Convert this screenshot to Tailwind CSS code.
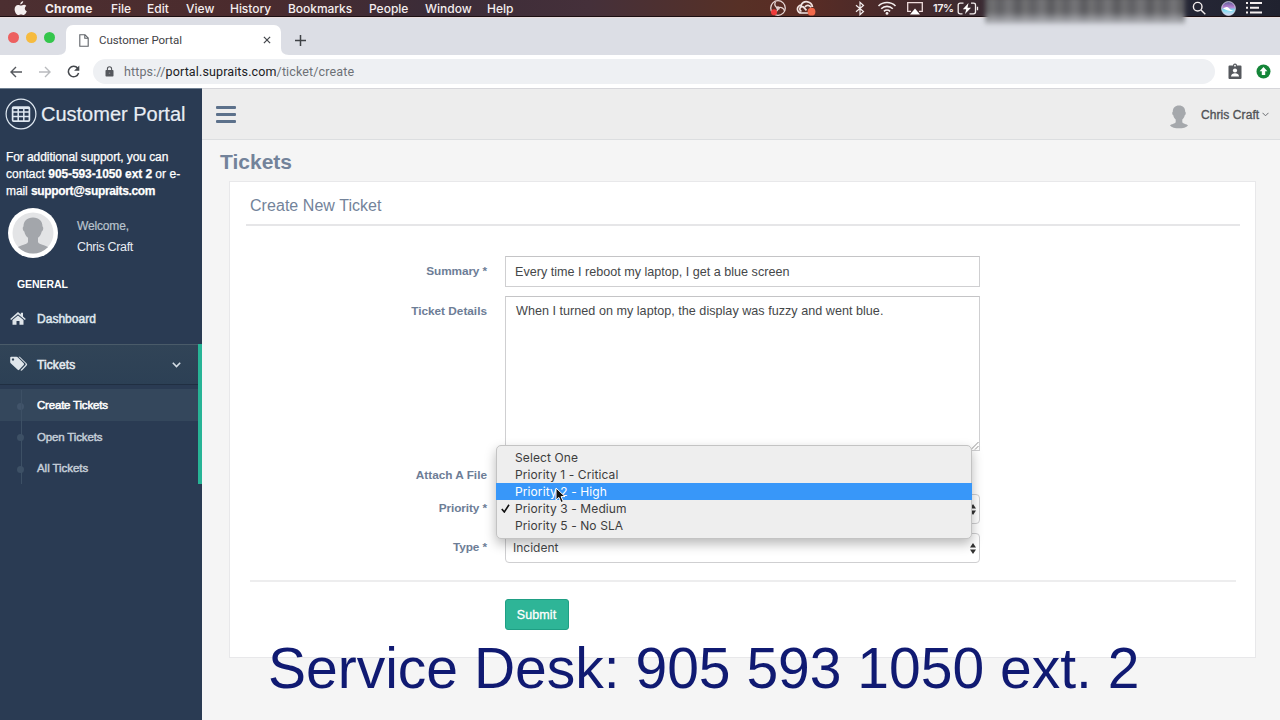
<!DOCTYPE html>
<html lang="en">
<head>
<meta charset="utf-8">
<title>Customer Portal</title>
<script src="https://cdn.jsdelivr.net/npm/@tailwindcss/browser@4"></script>
</head>
<body class="relative flex h-[720px] w-[1280px] flex-col overflow-hidden bg-[#f5f5f5] font-['Liberation_Sans',Arial,sans-serif]">

<!-- System menu bar -->
<div class="flex h-[17px] shrink-0 items-center border-b border-[#1b0f12] bg-[linear-gradient(90deg,#4c2f31_0px,#4b2b2d_250px,#3b2c38_430px,#45303a_590px,#573026_740px,#5a2c24_800px,#4a2a2a_880px,#3a2a32_980px,#252635_1190px,#20222f_1280px)] pl-[14px] font-[Inter,sans-serif] text-[12px] font-medium text-[#f4eeee]">
  <svg class="mr-[18px] h-[15px] w-[13px] shrink-0" viewBox="0 0 13 15" fill="#f4eeee"><path d="M9.2 0C9.3 1.8 8 3.3 6.3 3.4 6.1 1.7 7.6.2 9.2 0zM12.3 5c-2.2 1.5-1.8 4.4.5 5.3-.6 1.7-1.8 3.7-3.1 3.7-1 0-1.5-.6-2.7-.6s-1.700.6-2.700.6C2.500 14 .6 11 .6 8.200.6 5.500 2.200 3.900 4 3.900c1.200 0 2.100.7 2.900.7.800 0 1.800-.8 3.200-.8.9 0 1.700.4 2.200 1.200z"/></svg>
  <span class="w-[66px] pt-px font-bold tracking-[.2px]">Chrome</span>
  <span class="w-[36px] pt-px">File</span>
  <span class="w-[39px] pt-px">Edit</span>
  <span class="w-[44px] pt-px">View</span>
  <span class="w-[58px] pt-px tracking-[-.05px]">History</span>
  <span class="w-[81px] pt-px tracking-[-.05px]">Bookmarks</span>
  <span class="w-[56px] pt-px">People</span>
  <span class="w-[62px] pt-px">Window</span>
  <span class="w-[282px] pt-px">Help</span>
  <svg class="h-[16px] w-[18px] shrink-0" viewBox="0 0 18 16" fill="none" stroke="#e6d6d4" stroke-width="1.300"><circle cx="9" cy="8" r="7.300"/><path d="M9 8C6 7 5 4.500 6.500 2M9 8c3-1.500 6 0 6.500 3M9 8c0 3-2.500 5-5.500 4.200" /><circle cx="9" cy="8" r="1.200"/><circle cx="5" cy="12.300" r="3" fill="#ee3a3a" stroke="none"/></svg>
  <svg class="ml-[9px] h-[16px] w-[20px] shrink-0" viewBox="0 0 20 16" fill="none" stroke="#f1e4e2" stroke-width="1.700"><path d="M13 13H5.500a3.900 3.900 0 0 1-.4-7.800A6 6 0 0 1 16.500 7M10.500 10.300 8 7.700a2.300 2.300 0 1 0-2.500 3.500M9 7a3.500 3.500 0 0 1 6 .3"/><circle cx="15.500" cy="11.700" r="3.900" fill="#f2694a" stroke="none"/></svg>
  <svg class="ml-[38px] h-[15px] w-[12px] shrink-0" viewBox="0 0 12 15" fill="none" stroke="#f4eeee" stroke-width="1.200"><path d="M2 4.200l7.500 6.300L6 13.700V1.300l3.500 3.200L2 10.800"/></svg>
  <svg class="ml-[11px] h-[14px] w-[20px] shrink-0" viewBox="0 0 20 14" fill="none" stroke="#f4eeee" stroke-width="1.600"><path d="M1.500 5a12 12 0 0 1 17 0M4.200 7.800a8.200 8.200 0 0 1 11.600 0M6.900 10.300a4.500 4.500 0 0 1 6.200 0"/><circle cx="10" cy="12.400" r="1.400" fill="#f4eeee" stroke="none"/></svg>
  <svg class="ml-[9px] h-[14px] w-[18px] shrink-0" viewBox="0 0 18 14"><path d="M5 10.300H1.700V1.600h14.600v8.700H13" fill="none" stroke="#efdcdc" stroke-width="1.300"/><path d="M9 7.500l5 6H4z" fill="#fff"/></svg>
  <span class="ml-[9px] w-[24px] pt-px text-[11px] font-semibold tracking-[-.5px]">17%</span>
  <svg class="h-[13px] w-[22px] shrink-0" viewBox="0 0 22 13"><path d="M6.500 1.200H3.200Q1.200 1.200 1.200 3v7q0 1.800 2 1.800H5.500M14 1.200h2.500q2 0 2 1.800v7q0 1.800-2 1.800H12.500M20.500 4.800v3.500" fill="none" stroke="#f4eeee" stroke-width="1.300"/><path d="M11.500 1 5.800 7.200h3.400L8 12l6-6.300h-3.500z" fill="#fff"/></svg>
  <svg class="ml-[213px] h-[14px] w-[14px] shrink-0" viewBox="0 0 14 14" fill="none" stroke="#f4eeee" stroke-width="1.400"><circle cx="5.700" cy="5.700" r="4.300"/><path d="M9 9l4.300 4.300"/></svg>
  <svg class="ml-[15px] h-[15px] w-[15px] shrink-0" viewBox="0 0 15 15"><defs><linearGradient id="siri" x1="0" y1="0" x2="0" y2="1"><stop offset="0" stop-color="#5a5b94"/><stop offset=".4" stop-color="#b77fd0"/><stop offset=".6" stop-color="#77dcf0"/><stop offset="1" stop-color="#d9d5f2"/></linearGradient></defs><circle cx="7.500" cy="7.500" r="6.900" fill="url(#siri)" stroke="#d8d8e4" stroke-width=".8"/><path d="M2 7.500Q6 4.500 8 7.300T13 9Q9 11.500 2 7.500z" fill="#fff"/></svg>
  <svg class="ml-[10px] h-[12px] w-[17px] shrink-0" viewBox="0 0 17 12" fill="#f4eeee"><path d="M0 0h2v2H0zM0 4.700h2v2H0zM0 9.500h2v2H0zM4 0h12v2H4zM4 4.700h9v2H4zM4 9.500h12v2H4z"/></svg>
</div>
<!-- Obscured clock -->
<div class="absolute left-[985px] top-[-3px] h-[27px] w-[200px] bg-[linear-gradient(180deg,transparent_55%,#b9bbc1_100%),repeating-linear-gradient(90deg,#58585c_0px,#727274_7px,#5f5f63_15px,#77777a_24px,#59595d_33px)] blur-[2px]"></div>

<!-- Tab strip -->
<div class="flex h-[38px] shrink-0 items-end border-t border-[#e9dede] bg-[#dcdee5]">
  <div class="flex h-full w-[58px] items-center gap-[7px] pl-[8px] pt-[2px]">
    <i class="h-[11px] w-[11px] rounded-full bg-[#ed6060]"></i>
    <i class="h-[11px] w-[11px] rounded-full bg-[#f6bb3f]"></i>
    <i class="h-[11px] w-[11px] rounded-full bg-[#34c64c]"></i>
  </div>
  <svg class="h-[7px] w-[8px]" viewBox="0 0 8 7"><path d="M8 0v7H0q8 0 8-7z" fill="#fff"/></svg>
  <div class="flex h-[30px] w-[215px] items-center rounded-t-[7px] bg-white pl-[13px] pr-[9px]">
    <svg class="h-[13px] w-[10px]" viewBox="0 0 10 13" fill="none" stroke="#5f6368" stroke-width="1.100"><path d="M.8.700h5.200L9.200 4v8.300H.8zM5.800.700v3.500h3.400"/></svg>
    <span class="ml-[10px] flex-1 pt-px font-[Roboto,sans-serif] text-[11.500px] tracking-[-.05px] text-[#3f4246]">Customer Portal</span>
    <svg class="mr-[1px] h-[8px] w-[8px]" viewBox="0 0 9 9" stroke="#45484d" stroke-width="1.400"><path d="M1 1l7 7M8 1L1 8"/></svg>
  </div>
  <svg class="h-[7px] w-[8px]" viewBox="0 0 8 7"><path d="M0 0v7h8Q0 7 0 0z" fill="#fff"/></svg>
  <svg class="mb-[9px] ml-[6px] h-[11px] w-[11px]" viewBox="0 0 11 11" stroke="#3f4246" stroke-width="1.500"><path d="M5.500 0v11M0 5.500h11"/></svg>
</div>

<!-- Toolbar -->
<div class="flex h-[33px] shrink-0 items-center bg-white pl-[10px]">
  <svg class="h-[12px] w-[12px]" viewBox="0 0 12 12" fill="none" stroke="#55585d" stroke-width="1.400"><path d="M12 6H1.200M6 1L1 6l5 5"/></svg>
  <svg class="ml-[17px] h-[12px] w-[12px]" viewBox="0 0 12 12" fill="none" stroke="#b9bbbe" stroke-width="1.400"><path d="M0 6h10.800M6 1l5 5-5 5"/></svg>
  <svg class="ml-[16px] h-[13px] w-[13px]" viewBox="0 0 13 13"><path d="M10.700 3.300A5.200 5.200 0 1 0 11.600 8" fill="none" stroke="#45484d" stroke-width="1.500"/><path d="M12.300.600v5.200H7.100z" fill="#45484d"/></svg>
  <div class="ml-[13px] flex h-[25px] w-[1122px] items-center rounded-full bg-[#eef0f3] pl-[12px]">
    <svg class="h-[11px] w-[9px]" viewBox="0 0 9 11"><rect x=".5" y="4" width="8" height="6.500" rx=".8" fill="#55585d"/><path d="M2.400 4.500V2.900a2.100 2.100 0 0 1 4.200 0v1.600" fill="none" stroke="#55585d" stroke-width="1.100"/><circle cx="4.500" cy="7.200" r=".8" fill="#85888c"/></svg>
    <span class="ml-[10px] pt-px font-[Roboto,sans-serif] text-[12.500px] tracking-[.13px] text-[#6d7176]">https://<span class="text-[#202124]">portal.supraits.com</span>/ticket/create</span>
  </div>
  <svg class="ml-[13px] h-[17px] w-[14px]" viewBox="0 0 14 17"><path d="M1.500 2.500h3.500a2 2 0 0 1 4 0h3.500q1 0 1 1v11.500q0 1-1 1h-11q-1 0-1-1V3.500q0-1 1-1z" fill="#55585d"/><circle cx="7" cy="2.700" r=".9" fill="#fff"/><circle cx="7" cy="7.500" r="2.100" fill="#fff"/><path d="M3 13.500c0-4.300 8-4.300 8 0z" fill="#fff"/></svg>
  <svg class="ml-[14px] h-[15px] w-[15px]" viewBox="0 0 15 15"><circle cx="7.500" cy="7.500" r="7" fill="#148538"/><path d="M7.500 3l3.900 4.300H9.200v3.700H5.800V7.300H3.600z" fill="#fff"/></svg>
</div>

<div class="flex min-h-0 flex-1">
  <!-- Sidebar -->
  <aside class="flex w-[202px] shrink-0 flex-col border-t border-[#6f7f91] bg-[#2a3b53] text-[#e8edf3]">
    <div class="flex h-[51px] items-center pb-px pl-[5px]">
      <svg class="h-[32px] w-[32px]" viewBox="0 0 32 32" fill="none" stroke="#dfe8f1"><circle cx="16" cy="16" r="14.900" stroke-width="1.200"/><rect x="7.600" y="9.100" width="16.800" height="14" rx="1" stroke-width="1.700"/><path d="M13.200 9v14M18.800 9v14M8 14h16M8 18.500h16" stroke-width="1.500"/><path d="M7.500 10h17" stroke-width="2"/></svg>
      <span class="ml-[4px] text-[20px] [-webkit-text-stroke:.2px]">Customer Portal</span>
    </div>
    <p class="mt-[9px] w-[200px] whitespace-nowrap pl-[6px] text-[12px] leading-[17px] tracking-[-.08px] text-white [-webkit-text-stroke:.25px]">For additional support, you can<br><span class="tracking-[.04px]">contact <b class="tracking-[-.1px]">905-593-1050 ext 2</b> or e-</span><br>mail <b class="tracking-[-.34px]">support@supraits.com</b></p>
    <div class="mt-[7px] flex h-[52px] items-center pl-[8px]">
      <svg class="h-[50px] w-[50px]" viewBox="0 0 50 50"><defs><clipPath id="ava"><circle cx="25" cy="25" r="20.500"/></clipPath></defs><circle cx="25" cy="25" r="25" fill="#fff"/><circle cx="25" cy="25" r="20.500" fill="#e3e4e6"/><g clip-path="url(#ava)" fill="#a3a6ab"><path d="M25 9.500c6 0 9.500 3.500 9.500 9 1.300.5.800 4.500-.8 5-.5 3-2 5-3.700 6.300V34c1 3.500 12 3 14 9v7H6v-7c2-6 13-5.500 14-9v-4.200c-1.700-1.300-3.200-3.300-3.700-6.300-1.600-.5-2.100-4.500-.8-5 0-5.500 3.500-9 9.500-9z"/></g></svg>
      <div class="ml-[19px] pt-[7px] text-[12px] leading-[21px]">
        <div class="tracking-[-.15px] text-[#b9c3cd] [-webkit-text-stroke:.2px]">Welcome,</div>
        <div class="text-[12.500px] tracking-[-.35px]">Chris Craft</div>
      </div>
    </div>
    <div class="flex h-[35px] items-end pb-[3px] pl-[17px] text-[10.500px] font-bold leading-[14px] tracking-[-.05px] text-white">GENERAL</div>
    <div class="flex h-[50px] items-center pl-[10px]">
      <svg class="mb-[2px] h-[13px] w-[16px]" viewBox="0 0 16 13" fill="#dfe5ea"><path d="M8 0l2.800 2.500V.700H13v3.800l2.800 2.400-.9 1.100L8 2.200 1.100 8 .200 6.900z"/><path d="M8 3.400l5.500 4.600v4.800H9.500V9H6.500v3.800h-4V8z"/></svg>
      <span class="ml-[11px] text-[12px] tracking-[.02px] text-[#dfe6ee] [-webkit-text-stroke:.5px]">Dashboard</span>
    </div>
    <div class="border-r-[4px] border-[#27b496]">
      <div class="flex h-[41px] items-center border-b border-t border-b-[#202f42] border-t-[#4a5b69] bg-linear-to-b from-[#314457] to-[#2c4055] pl-[10px]">
        <svg class="mb-[3px] h-[15px] w-[18px]" viewBox="0 0 18 15" fill="#dfe5ea"><path fill-rule="evenodd" d="M1.200.800h5.300q.7 0 1.200.5l6 6q.8.800 0 1.600l-4.500 4.900q-.8.700-1.500 0L.700 7.300Q.200 6.800.200 6V1.800q0-1 1-1zM3 2.300a1.200 1.200 0 1 0 .01 0z"/><path d="M8.500.800h1.300l6.900 6.600q1 1 0 2l-4.500 4.900q-.8.700-1.800 0l5-5.400q.6-.8 0-1.500z"/></svg>
        <span class="ml-[9px] flex-1 text-[12px] tracking-[.1px] text-[#e6ecf2] [-webkit-text-stroke:.5px]">Tickets</span>
        <svg class="mr-[17px] h-[6px] w-[9px]" viewBox="0 0 9 6" fill="none" stroke="#d5dde5" stroke-width="1.600"><path d="M.8.800l3.700 3.700L8.200.800"/></svg>
      </div>
      <div class="relative pt-[4px] text-[11.500px] leading-[32px] tracking-[-.2px]">
        <div class="absolute bottom-0 left-[21px] top-[5px] w-px bg-[#3d5065]"></div>
        <div class="flex h-[32px] items-center bg-[#34475c] pl-[17px]"><i class="mr-[13px] mt-[2px] h-[7px] w-[7px] rounded-full bg-[#41546a]"></i><span class="text-white [-webkit-text-stroke:.5px]">Create Tickets</span></div>
        <div class="flex h-[31px] items-center pl-[17px]"><i class="mr-[13px] mt-[2px] h-[7px] w-[7px] rounded-full bg-[#3d5065]"></i><span class="tracking-[-.15px] text-[#c5ced8] [-webkit-text-stroke:.45px]">Open Tickets</span></div>
        <div class="flex h-[32px] items-center pl-[17px]"><i class="mr-[13px] mt-[2px] h-[7px] w-[7px] rounded-full bg-[#3d5065]"></i><span class="tracking-[-.05px] text-[#c5ced8] [-webkit-text-stroke:.45px]">All Tickets</span></div>
      </div>
    </div>
  </aside>

  <!-- Main -->
  <main class="flex min-w-0 flex-1 flex-col">
    <header class="flex h-[52px] shrink-0 items-center border-b border-t border-b-[#dcdee0] border-t-[#d6d6da] bg-[#ededed] pl-[14px]">
      <div class="flex flex-1 flex-col gap-[4px]"><i class="h-[3px] w-[20px] rounded-[1px] bg-[#5c718b]"></i><i class="h-[3px] w-[20px] rounded-[1px] bg-[#5c718b]"></i><i class="h-[3px] w-[20px] rounded-[1px] bg-[#5c718b]"></i></div>
      <svg class="mt-[6px] h-[24px] w-[20px]" viewBox="0 0 20 24" fill="#a5a8ac"><path d="M10 .500c4 0 6.200 2.300 6.200 6.300 1 .4.600 3.200-.5 3.500-.3 2-1.400 3.500-2.400 4.300v2.600c.7 1.800 4.600 1.500 5.700 3.300C16 24.300 4 24.300 1 20.500c1.100-1.800 5-1.500 5.700-3.300v-2.600c-1-.8-2.100-2.300-2.400-4.300-1.100-.3-1.500-3.100-.5-3.500C3.800 2.800 6 .500 10 .500z"/></svg>
      <span class="ml-[12px] w-[59px] pt-px text-[12px] tracking-[.08px] text-[#515356] [-webkit-text-stroke:.35px]">Chris Craft</span>
      <svg class="ml-[2px] mr-[11px] h-[5px] w-[7px]" viewBox="0 0 7 5" fill="none" stroke="#6a6d71"><path d="M.5.800l3 3 3-3"/></svg>
    </header>

    <h1 class="ml-[18px] mt-[8px] h-[28px] text-[21px] font-bold leading-[28px] text-[#73839a]">Tickets</h1>

    <section class="ml-[27px] mt-[5px] flex h-[477px] w-[1027px] flex-col border border-[#e8e8ea] bg-white px-[16px]">
      <h2 class="h-[44px] w-[994px] border-b-2 border-[#e6e6e8] pl-[4px] text-[16px] leading-[47px] tracking-[.05px] text-[#73839a]">Create New Ticket</h2>
      <form class="flex flex-col text-[11.800px] text-[#454749]">
        <div class="mt-[30px] flex h-[31px] items-center gap-[18px]">
          <label class="w-[241px] text-right font-bold tracking-[-.1px] text-[#6d7d96]">Summary *</label>
          <div class="flex h-[31px] w-[475px] items-center border border-[#cfcfd1] border-t-[#c4c4c6] pl-[9px] pt-px text-[12.600px]">Every time I reboot my laptop, I get a blue screen</div>
        </div>
        <div class="mt-[9px] flex h-[155px] gap-[18px]">
          <label class="w-[241px] text-right font-bold leading-[31px] text-[#6d7d96]">Ticket Details</label>
          <div class="flex h-[155px] w-[475px] items-end justify-between border border-[#cfcfd1] border-t-[#c4c4c6] pl-[10px]">
            <span class="self-start text-[12.600px] leading-[29px] tracking-[.02px]">When I turned on my laptop, the display was fuzzy and went blue.</span>
            <svg class="h-[8px] w-[8px]" viewBox="0 0 8 8" stroke="#888" stroke-width=".9"><path d="M0 7.500L7.500 0M4 7.500L7.500 4"/></svg>
          </div>
        </div>
        <div class="mt-[10px] flex h-[29px] items-center"><label class="w-[241px] text-right font-bold text-[#6d7d96]">Attach A File</label></div>
        <div class="mt-[4px] flex h-[30px] items-center gap-[18px]">
          <label class="w-[241px] text-right font-bold tracking-[-.1px] text-[#6d7d96]">Priority *</label>
          <div class="flex h-[30px] w-[475px] items-center justify-end rounded-[4px] border border-[#cfcfd1] pr-[3px]">
            <svg class="h-[11px] w-[6px]" viewBox="0 0 6 11" fill="#333"><path d="M3 0l3 4.500H0zM3 11l3-4.500H0z"/></svg>
          </div>
        </div>
        <div class="mt-[9px] flex h-[30px] items-center gap-[18px]">
          <label class="w-[241px] text-right font-bold tracking-[-.1px] text-[#6d7d96]">Type *</label>
          <div class="flex h-[30px] w-[475px] items-center justify-between rounded-[4px] border border-[#cfcfd1] pl-[7px] pr-[3px] font-[Inter,sans-serif] text-[12px]">Incident
            <svg class="h-[11px] w-[6px]" viewBox="0 0 6 11" fill="#333"><path d="M3 0l3 4.500H0zM3 11l3-4.500H0z"/></svg>
          </div>
        </div>
        <div class="ml-[4px] mt-[17px] h-[2px] w-[986px] bg-[#ededee]"></div>
        <button type="button" class="ml-[259px] mt-[17px] h-[31px] w-[64px] rounded-[3px] border border-[#1f9f84] bg-[#2eb597] pr-px pt-px text-[12.500px] tracking-[.1px] text-white [-webkit-text-stroke:.3px]">Submit</button>
      </form>
    </section>
  </main>
</div>

<!-- Priority menu -->
<div class="absolute left-[496px] top-[445px] h-[94px] w-[476px] rounded-[5px] border border-[#c3c3c3] bg-[#eeeeee] pt-[3px] font-[Inter,sans-serif] text-[12px] leading-[17px] tracking-[.1px] text-[#3d3d3d] shadow-[0_5px_12px_rgba(0,0,0,0.28)]">
  <div class="pl-[18px]">Select One</div>
  <div class="pl-[18px]">Priority 1 - Critical</div>
  <div class="-mx-px bg-[#3897f9] pl-[19px] text-white">Priority 2 - High</div>
  <div class="flex items-center"><svg class="ml-[4px] mr-[5px] h-[9px] w-[9px]" viewBox="0 0 9 9" fill="none" stroke="#111" stroke-width="1.600"><path d="M.8 5l2.500 3L8 .800"/></svg>Priority 3 - Medium</div>
  <div class="pl-[18px]">Priority 5 - No SLA</div>
</div>

<!-- Pointer -->
<svg class="absolute left-[555px] top-[487px] h-[17px] w-[12px]" viewBox="0 0 12 17"><path d="M1 1v12l2.900-2.600L6 15.500l2.300-1-2.200-4.900H10z" fill="#111" stroke="#fff" stroke-width="1"/></svg>

<!-- Caption -->
<div class="absolute left-[268px] top-[636px] whitespace-nowrap text-[57px] leading-[64px] text-[#101a72]">Service Desk: 905 593 1050 ext. 2</div>
</body>
</html>
